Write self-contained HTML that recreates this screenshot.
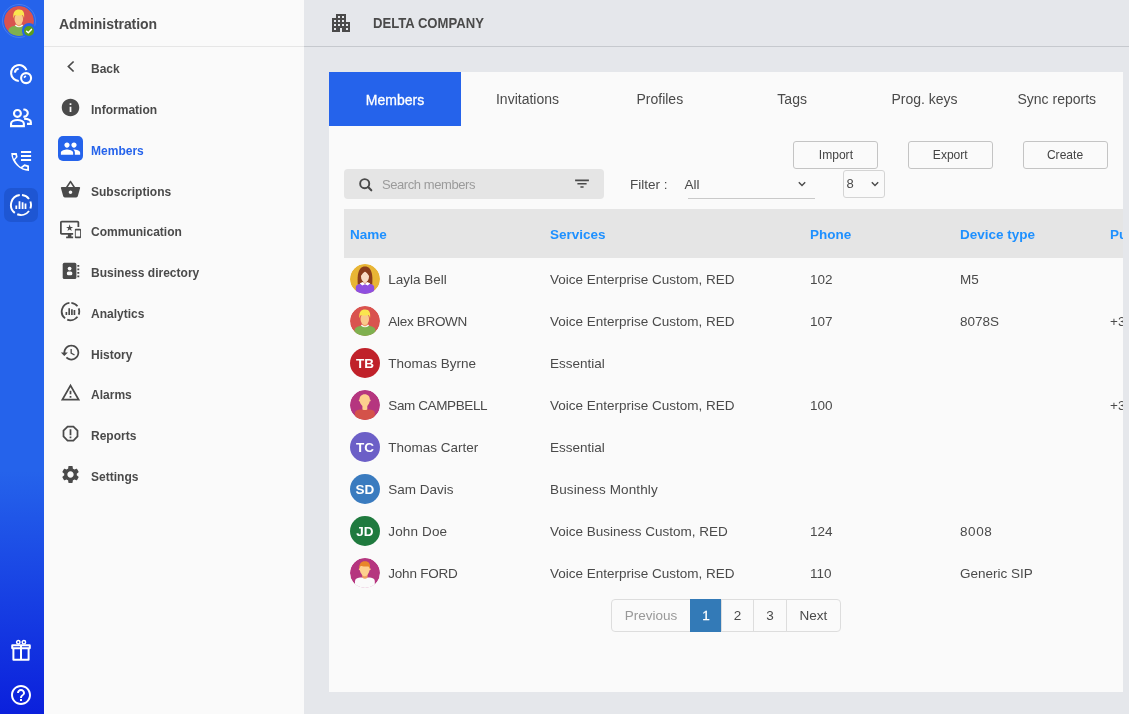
<!DOCTYPE html>
<html>
<head>
<meta charset="utf-8">
<title>Administration</title>
<style>
*{box-sizing:border-box;margin:0;padding:0}
html,body{width:1129px;height:714px;overflow:hidden}
.gl{position:absolute;left:0;top:0;width:100%;height:100%;will-change:transform}
body{font-family:"Liberation Sans",sans-serif;background:#e5e7eb;color:#4a4a4a;position:relative}
.abs{position:absolute}
#rail{position:absolute;left:0;top:0;width:44px;height:714px;background:linear-gradient(180deg,#2563eb 0%,#2563eb 66%,#0b20dc 100%)}
#side{position:absolute;left:44px;top:0;width:260px;height:714px;background:#fafafa}
#side .hd{position:absolute;left:0;top:0;width:260px;height:47px;border-bottom:1px solid #e6e6e6}
#side .hd span{position:absolute;left:15px;top:15px;font-weight:bold;font-size:14px;line-height:18px;color:#4a4a4a;letter-spacing:-0.05px}
.nav{position:absolute;left:47px;font-weight:bold;font-size:13px;line-height:16px;color:#4a4a4a;white-space:nowrap;transform-origin:0 50%;transform:scaleX(.925)}
.nav.on{color:#2563eb}
.ni{position:absolute;left:16px;width:21px;height:21px;fill:#4a4a4a}
#main .hd{position:absolute;left:304px;top:0;width:825px;height:47px;border-bottom:1px solid #c6c9ce}
#panel{position:absolute;left:329px;top:72px;width:794px;height:620px;background:#fafafa;overflow:hidden}
.tab{position:absolute;top:0;height:54px;width:132.33px;text-align:center;font-size:14px;line-height:54px;color:#4a4a4a}
.tab.on{background:#2563eb;color:#fff;left:0;width:132px}
.btn{position:absolute;top:69px;width:85px;height:28px;border:1px solid #c4c4c4;border-radius:3px;background:#fafafa;text-align:center;font-size:13.33px;line-height:26px;color:#444}
.btn span{display:inline-block;transform:scaleX(.905)}
.th{position:absolute;top:154px;font-weight:bold;font-size:13.5px;line-height:18px;color:#1e90ff;white-space:nowrap}
.td{position:absolute;font-size:13.5px;line-height:18px;color:#4a4a4a;white-space:nowrap}
.av{position:absolute;left:21px;width:30px;height:30px;border-radius:50%;overflow:hidden;color:#fff;font-weight:bold;font-size:13.5px;line-height:31.4px;text-align:center}
.pg{position:absolute;top:527px;height:33px;border:1px solid #ddd;background:#fafafa;font-size:13.5px;line-height:31px;text-align:center;color:#4a4a4a}
</style>
</head>
<body>
<div id="rail">
<div class="abs" style="left:1.600px;top:3.700px;width:34.800px;height:34.800px;border-radius:50%;border:1.500px solid rgba(255,255,255,.15)"></div>
<svg class="abs" style="left:4px;top:6px" width="30" height="30" viewBox="-15 -15 30 30"><defs><clipPath id="c0"><circle r="15"/></clipPath></defs><g clip-path="url(#c0)"><circle r="15" fill="#d9534f"/><path d="M-10.500 16V9.500C-10.500 6.500-7 5.200-3.500 4.800L3.500 4.800C7 5.200 10.500 6.500 10.500 9.500V16z" fill="#7fb04f"/><path d="M-4.200 4.500Q0 8.200 4.200 4.500L3.800 3.800-3.800 3.800z" fill="#f6f3ea"/><path d="M-2.100 1H2.100V4.400Q0 6-2.100 4.400z" fill="#eea063"/><ellipse cx="-0.200" cy="-1.900" rx="4.300" ry="6" fill="#f9c98b"/><path d="M-5.500-2.500C-6.600-9.500-3.200-11.800 0.200-11.600 4.200-11.500 5.900-8.500 5-2.500 4.700-4.800 4-5.800 3-6.100 0-5.100-3-5.600-4-6.100-4.800-5.300-5.200-4.300-5.500-2.500z" fill="#fae54e"/></g></svg>
<div class="abs" style="left:21.600px;top:23.400px;width:14.800px;height:14.800px;border-radius:50%;background:#2563eb"></div>
<div class="abs" style="left:24px;top:26px;width:10px;height:10px;border-radius:50%;background:#5a9e1e"></div>
<svg class="abs" style="left:24px;top:26px" width="10" height="10" viewBox="0 0 10 10"><path d="M2.600 5.200L4.300 6.800 7.400 3.400" stroke="#fff" stroke-width="1.500" fill="none" stroke-linecap="round" stroke-linejoin="round"/></svg>
<svg class="abs" style="left:8px;top:62px" width="26" height="24" viewBox="0 0 26 24"><g fill="none" stroke="#fff" stroke-width="2.100" stroke-linecap="butt"><path d="M18.500 8.200A7.950 7.950 0 1 0 10.800 18.950"/><path d="M6.900 10.600A4.300 4.300 0 0 1 10.700 6.800"/><circle cx="18.100" cy="16.100" r="5"/><path d="M16 15.700L17.800 13.900" stroke-width="1.700"/></g></svg>
<svg class="abs" style="left:8px;top:106px" width="26" height="24" viewBox="0 0 26 24"><g fill="none" stroke="#fff" stroke-width="2.100" stroke-linejoin="miter"><circle cx="9.430" cy="7.420" r="3.450"/><path d="M3.050 20.100V17.600C3.050 15.200 6.500 14 9.450 14S15.850 15.200 15.850 17.600V20.100z"/><path d="M15.370 3.700A3.500 3.500 0 1 1 15.370 10.460"/><path d="M16.100 12.650C20 12.900 22.850 14 22.850 16.300V17.900H19"/></g></svg>
<svg class="abs" style="left:8px;top:149px" width="26" height="24" viewBox="0 0 26 24"><g fill="none" stroke="#fff" stroke-width="1.800" stroke-linejoin="round"><path fill="#fff" stroke="none" fill-rule="evenodd" d="M3.200 4.100H8.800L9.600 8.100 7 10.900C8.500 14 10.500 16.300 12.800 17.900L16.400 15.200 21 16.400V21.900C12 21.900 3.500 14 3.200 4.100zM4.900 5.900H7.450L7.900 8.100 6 10C5.300 8.700 5 7.400 4.900 5.900zM14.300 19.100L16.700 17.200 19.200 17.900V20.100C17.500 20 15.800 19.700 14.300 19.100z"/><path d="M13 3H23.100M13 7H23.100M13 11H23.100" stroke-width="1.900"/></g></svg>
<div class="abs" style="left:4px;top:188px;width:34px;height:34px;border-radius:7px;background:#1e56d3"></div>
<svg class="abs" style="left:9px;top:192.900px" width="24" height="24" viewBox="0 0 24 24"><path d="M5.84 19.88A10 10 0 0 1 10.78 2.07M12.96 2.05A10 10 0 0 1 19.99 5.98M21.37 8.50A10 10 0 0 1 21.37 15.50M19.99 18.02A10 10 0 0 1 8.25 21.27" stroke="#fff" stroke-width="1.95" fill="none" stroke-linecap="butt"/><path d="M7.300 15.900V12.500M10.500 15.900V8.300M13.600 15.900V9.300M16.500 15.900V10.400" stroke="#fff" stroke-width="1.79" fill="none" stroke-linecap="butt"/></svg>
<svg class="abs" style="left:9px;top:639px" width="24" height="24" viewBox="0 0 24 24"><g fill="none" stroke="#fff" stroke-width="2" stroke-linejoin="round"><rect x="3.200" y="6.200" width="17.600" height="3" rx="0.300"/><path d="M4.400 9.200V20.800H19.600V9.200"/><path d="M12 6V20.800"/><circle cx="9.300" cy="3.300" r="1.700" stroke-width="1.500"/><circle cx="14.900" cy="3.300" r="1.700" stroke-width="1.500"/></g></svg>
<svg class="abs" style="left:9px;top:683px" width="24" height="24" viewBox="0 0 24 24"><path fill="#fff" d="M11 18h2v-2h-2v2zm1-16C6.480 2 2 6.480 2 12s4.480 10 10 10 10-4.480 10-10S17.520 2 12 2zm0 18c-4.410 0-8-3.590-8-8s3.590-8 8-8 8 3.590 8 8-3.590 8-8 8zm0-14c-2.210 0-4 1.790-4 4h2c0-1.100.9-2 2-2s2 .9 2 2c0 2-3 1.750-3 5h2c0-2.250 3-2.500 3-5 0-2.210-1.790-4-4-4z"/></svg>
</div>
<div id="side"><div class="gl">
<div class="hd"><span>Administration</span></div>
<svg class="abs" style="left:22px;top:60.0px" width="10" height="13" viewBox="0 0 10 13"><path d="M7.600 1.500L2.400 6.500 7.600 11.500" stroke="#4a4a4a" stroke-width="1.700" fill="none"/></svg>
<div class="nav" style="top:61px">Back</div>
<svg class="abs" style="left:16px;top:96.7px" width="21" height="21" viewBox="0 0 24 24"><path fill="#4a4a4a" d="M12 2C6.48 2 2 6.48 2 12s4.48 10 10 10 10-4.48 10-10S17.52 2 12 2zm1 15h-2v-6h2v6zm0-8h-2V7h2v2z"/></svg>
<div class="nav" style="top:102px">Information</div>
<div class="abs" style="left:14px;top:135.7px;width:25px;height:25px;border-radius:5px;background:#2563eb"></div>
<svg class="abs" style="left:16px;top:137.7px" width="21" height="21" viewBox="0 0 24 24"><path fill="#fff" d="M16 11c1.66 0 2.99-1.34 2.99-3S17.66 5 16 5c-1.66 0-3 1.34-3 3s1.34 3 3 3zm-8 0c1.66 0 2.99-1.34 2.99-3S9.66 5 8 5C6.34 5 5 6.34 5 8s1.34 3 3 3zm0 2c-2.33 0-7 1.17-7 3.5V19h14v-2.5c0-2.33-4.67-3.5-7-3.5zm8 0c-.29 0-.62.02-.97.05 1.16.84 1.97 1.97 1.97 3.45V19h6v-2.5c0-2.33-4.67-3.5-7-3.5z"/></svg>
<div class="nav on" style="top:143px">Members</div>
<svg class="abs" style="left:16px;top:178.7px" width="21" height="21" viewBox="0 0 24 24"><path fill="#4a4a4a" d="M17.21 9l-4.38-6.56c-.19-.28-.51-.42-.83-.42-.32 0-.64.14-.83.43L6.79 9H2c-.55 0-1 .45-1 1 0 .09.01.18.04.27l2.54 9.27c.23.84 1 1.46 1.92 1.46h13c.92 0 1.69-.62 1.93-1.46l2.54-9.27L23 10c0-.55-.45-1-1-1h-4.790zM9 9l3-4.400L15 9H9zm3 8c-1.100 0-2-.9-2-2s.9-2 2-2 2 .9 2 2-.9 2-2 2z"/></svg>
<div class="nav" style="top:184px">Subscriptions</div>
<svg class="abs" style="left:16px;top:218.7px" width="21" height="21" viewBox="0 0 24 24"><path fill="#4a4a4a" d="M23 11.010L18 11c-.55 0-1 .45-1 1v9c0 .55.45 1 1 1h5c.55 0 1-.45 1-1v-9c0-.55-.45-.99-1-.99zM23 20h-5v-7h5v7zM20 2H2C.89 2 0 2.890 0 4v12c0 1.100.89 2 2 2h7v2H7v2h8v-2h-2v-2h2v-2H2V4h18v5h2V4c0-1.110-.9-2-2-2zm-8.030 7L11 6l-.97 3H7l2.470 1.760-.94 2.910 2.470-1.800 2.470 1.800-.94-2.910L15 9h-3.030z"/></svg>
<div class="nav" style="top:224px">Communication</div>
<svg class="abs" style="left:16px;top:259.7px" width="21" height="21" viewBox="0 0 21 21"><rect x="2.700" y="2.800" width="13.700" height="16.300" rx="1.600" fill="#4a4a4a"/><circle cx="9.600" cy="8.600" r="1.900" fill="#fafafa"/><rect x="6.900" y="11.500" width="5.400" height="3.700" rx="1.500" fill="#fafafa"/><path d="M18.300 4.950V18" stroke="#4a4a4a" stroke-width="1.900" stroke-dasharray="1.900 1.600"/></svg>
<div class="nav" style="top:265px">Business directory</div>
<svg class="abs" style="left:16px;top:300.7px" width="21" height="21" viewBox="0 0 24 24"><path d="M5.84 19.88A10 10 0 0 1 10.78 2.07M12.96 2.05A10 10 0 0 1 19.99 5.98M21.37 8.50A10 10 0 0 1 21.37 15.50M19.99 18.02A10 10 0 0 1 8.25 21.27" stroke="#4a4a4a" stroke-width="2.05" fill="none" stroke-linecap="butt"/><path d="M7.300 15.900V12.500M10.500 15.900V8.300M13.600 15.900V9.300M16.500 15.900V10.400" stroke="#4a4a4a" stroke-width="1.89" fill="none" stroke-linecap="butt"/></svg>
<div class="nav" style="top:306px">Analytics</div>
<svg class="abs" style="left:16px;top:341.7px" width="21" height="21" viewBox="0 0 24 24"><path fill="#4a4a4a" d="M13 3c-4.970 0-9 4.030-9 9H1l3.890 3.890.07.14L9 12H6c0-3.870 3.130-7 7-7s7 3.130 7 7-3.130 7-7 7c-1.930 0-3.680-.79-4.940-2.060l-1.420 1.420C8.270 19.990 10.510 21 13 21c4.970 0 9-4.030 9-9s-4.030-9-9-9zm-1 5v5l4.280 2.540.72-1.210-3.500-2.080V8H12z"/></svg>
<div class="nav" style="top:347px">History</div>
<svg class="abs" style="left:16px;top:381.7px" width="21" height="21" viewBox="0 0 24 24"><path fill="#4a4a4a" d="M12 5.990L19.530 19H4.470L12 5.990M12 2L1 21h22L12 2zm1 14h-2v2h2v-2zm0-6h-2v4h2v-4z"/></svg>
<div class="nav" style="top:387px">Alarms</div>
<svg class="abs" style="left:16px;top:422.7px" width="21" height="21" viewBox="0 0 24 24"><path fill="#4a4a4a" d="M15.730 3H8.270L3 8.270v7.460L8.270 21h7.460L21 15.730V8.270L15.730 3zM19 14.900L14.900 19H9.100L5 14.900V9.100L9.100 5h5.800L19 9.100v5.800zM11 7h2v7h-2zm0 8.500h2v2h-2z"/></svg>
<div class="nav" style="top:428px">Reports</div>
<svg class="abs" style="left:16px;top:463.7px" width="21" height="21" viewBox="0 0 24 24"><path fill="#4a4a4a" d="M19.140 12.940c.04-.3.06-.61.06-.94 0-.32-.02-.64-.07-.94l2.030-1.580c.18-.14.23-.41.12-.61l-1.920-3.320c-.12-.22-.37-.29-.59-.22l-2.390.96c-.5-.38-1.030-.7-1.620-.94l-.36-2.540c-.04-.24-.24-.41-.48-.41h-3.840c-.24 0-.43.17-.47.41l-.36 2.540c-.59.24-1.130.57-1.620.94l-2.390-.96c-.22-.08-.47 0-.59.220L2.740 8.870c-.12.21-.08.47.12.61l2.030 1.580c-.05.3-.09.63-.09.94s.02.64.07.94l-2.030 1.580c-.18.14-.23.41-.12.61l1.920 3.320c.12.22.37.29.59.22l2.390-.96c.5.38 1.030.7 1.620.94l.36 2.540c.05.24.24.41.48.41h3.840c.24 0 .44-.17.47-.41l.36-2.540c.59-.24 1.130-.56 1.620-.94l2.390.96c.22.08.47 0 .59-.22l1.920-3.320c.12-.22.07-.47-.12-.61l-2.010-1.580zM12 15.600c-1.980 0-3.600-1.620-3.600-3.600s1.620-3.600 3.600-3.600 3.600 1.620 3.600 3.600-1.620 3.600-3.600 3.600z"/></svg>
<div class="nav" style="top:469px">Settings</div>
</div></div>
<div id="main"><div class="hd"></div><div class="gl">
<svg class="abs" style="left:329px;top:11px" width="24" height="24" viewBox="0 0 24 24"><path fill="#4a4a4a" d="M17 11V3H7v4H3v14h8v-4h2v4h8V11h-4zM7 19H5v-2h2v2zm0-4H5v-2h2v2zm0-4H5V9h2v2zm4 4H9v-2h2v2zm0-4H9V9h2v2zm0-4H9V5h2v2zm4 8h-2v-2h2v2zm0-4h-2V9h2v2zm0-4h-2V5h2v2zm4 12h-2v-2h2v2zm0-4h-2v-2h2v2z"/></svg>
<div class="abs" style="left:373px;top:14px;font-weight:bold;font-size:14px;line-height:18px;color:#4a4a4a;white-space:nowrap;transform-origin:0 50%;transform:scaleX(.936)">DELTA COMPANY</div>
</div></div>
<div id="panel"><div class="gl">
<div class="tab on" style="padding-top:1px;-webkit-text-stroke:0.3px #fff">Members</div>
<div class="tab" style="left:132.33px">Invitations</div>
<div class="tab" style="left:264.66px">Profiles</div>
<div class="tab" style="left:396.99px">Tags</div>
<div class="tab" style="left:529.32px">Prog. keys</div>
<div class="tab" style="left:661.65px">Sync reports</div>
<div class="btn" style="left:464px"><span>Import</span></div>
<div class="btn" style="left:579px"><span>Export</span></div>
<div class="btn" style="left:694px"><span>Create</span></div>
<div class="abs" style="left:15px;top:97px;width:260px;height:30px;border-radius:4px;background:#e5e5e5"></div>
<svg class="abs" style="left:29.700px;top:105.600px" width="14" height="14" viewBox="0 0 14 14"><circle cx="5.700" cy="5.700" r="4.550" stroke="#4a4a4a" stroke-width="1.900" fill="none"/><path d="M9.100 9.100L12.300 12.300" stroke="#4a4a4a" stroke-width="2.100" stroke-linecap="round"/></svg>
<div class="abs" style="left:53px;top:104px;font-size:13px;line-height:18px;color:#9b9b9b;letter-spacing:-0.42px;white-space:nowrap">Search members</div>
<svg class="abs" style="left:245px;top:106px" width="16" height="12" viewBox="0 0 16 12"><path d="M1.100 2.400H14.900M3.400 5.700H12.600M6.400 9H9.600" stroke="#4a4a4a" stroke-width="1.600" fill="none"/></svg>
<div class="abs" style="left:301px;top:104px;font-size:13.5px;line-height:18px;white-space:nowrap">Filter :</div>
<div class="abs" style="left:355.500px;top:104px;font-size:13.5px;line-height:18px;white-space:nowrap">All</div>
<div class="abs" style="left:359px;top:126px;width:127px;height:1px;background:#c9c9c9"></div>
<svg class="abs" style="left:468px;top:108px" width="10" height="8" viewBox="0 0 10 8"><path d="M1.800 2.200L5 5.500 8.200 2.200" stroke="#4a4a4a" stroke-width="1.400" fill="none"/></svg>
<div class="abs" style="left:514px;top:98px;width:42px;height:28px;border:1px solid #d4d4d4;border-radius:3px"></div>
<div class="abs" style="left:517.500px;top:103px;font-size:13px;line-height:18px">8</div>
<svg class="abs" style="left:541px;top:108px" width="10" height="8" viewBox="0 0 10 8"><path d="M1.800 2.200L5 5.500 8.200 2.200" stroke="#4a4a4a" stroke-width="1.400" fill="none"/></svg>
<div class="abs" style="left:15px;top:137px;width:800px;height:48.500px;background:#e5e5e5"></div>
<div class="th" style="left:21px">Name</div>
<div class="th" style="left:221px">Services</div>
<div class="th" style="left:481px">Phone</div>
<div class="th" style="left:631px">Device type</div>
<div class="th" style="left:781px">Public number</div>
<svg class="abs" style="left:21px;top:192px" width="30" height="30" viewBox="-15 -15 30 30"><defs><clipPath id="c1"><circle r="15"/></clipPath></defs><g clip-path="url(#c1)"><circle r="15" fill="#e8b535"/><path d="M-7.200 5.500C-7.800-2-7.500-12.500 0-12.500S7.800-2 7.200 5.500z" fill="#8a3d1c"/><path d="M-9.200 16V8.500C-9.200 5.800-6 5-3 4.600H3C6 5 9.200 5.800 9.200 8.500V16z" fill="#8f4fe0"/><path d="M-5.300 4.200L-2 3 0 5.200 2 3 5.300 4.200 2.800 6.500 0 5.200-2.800 6.500z" fill="#fff"/><path d="M-1.600 1H1.600V4Q0 5.300-1.600 4z" fill="#f3cdb0"/><ellipse cx="0" cy="-2.400" rx="4" ry="5.400" fill="#f8dcc4"/><path d="M-4.400-3C-4.600-7-3-9 0-9S4.600-7 4.400-3C3-5 1-6.800 0-7.600-1-6.800-3-5-4.400-3z" fill="#8a3d1c"/></g></svg>
<div class="td" style="left:59.30000000000001px;top:199.4px">Layla Bell</div>
<div class="td" style="left:221px;top:199.4px">Voice Enterprise Custom, RED</div>
<div class="td" style="left:481px;top:199.4px">102</div>
<div class="td" style="left:631px;top:199.4px">M5</div>
<svg class="abs" style="left:21px;top:234px" width="30" height="30" viewBox="-15 -15 30 30"><defs><clipPath id="c2"><circle r="15"/></clipPath></defs><g clip-path="url(#c2)"><circle r="15" fill="#d9534f"/><path d="M-10.500 16V9.500C-10.500 6.500-7 5.200-3.500 4.800L3.500 4.800C7 5.200 10.500 6.500 10.500 9.500V16z" fill="#7fb04f"/><path d="M-4.200 4.500Q0 8.200 4.200 4.500L3.800 3.800-3.800 3.800z" fill="#f6f3ea"/><path d="M-2.100 1H2.100V4.400Q0 6-2.100 4.400z" fill="#eea063"/><ellipse cx="-0.200" cy="-1.900" rx="4.300" ry="6" fill="#f9c98b"/><path d="M-5.500-2.500C-6.600-9.500-3.200-11.800 0.200-11.600 4.200-11.500 5.900-8.500 5-2.500 4.700-4.800 4-5.800 3-6.100 0-5.100-3-5.600-4-6.100-4.800-5.300-5.200-4.300-5.500-2.500z" fill="#fae54e"/></g></svg>
<div class="td" style="left:59.30000000000001px;top:241.4px;letter-spacing:-0.31px">Alex BROWN</div>
<div class="td" style="left:221px;top:241.4px">Voice Enterprise Custom, RED</div>
<div class="td" style="left:481px;top:241.4px">107</div>
<div class="td" style="left:631px;top:241.4px">8078S</div>
<div class="td" style="left:781px;top:241.4px">+33</div>
<div class="av" style="top:276px;background:#c0212a">TB</div>
<div class="td" style="left:59.30000000000001px;top:283.4px">Thomas Byrne</div>
<div class="td" style="left:221px;top:283.4px">Essential</div>
<svg class="abs" style="left:21px;top:318px" width="30" height="30" viewBox="-15 -15 30 30"><defs><clipPath id="c4"><circle r="15"/></clipPath></defs><g clip-path="url(#c4)"><circle r="15" fill="#b5367f"/><path d="M-10 16V8.300C-10 6-8.500 5.100-5 4.600H5C8.300 5.100 9.800 6 9.800 8.300V16z" fill="#d4524a"/><path d="M-0.300-10.800C3-10.800 4.900-8.500 4.900-5.500 4.900-2.500 3.500-0.300 2.300 1V4.400Q0 5.600-2.600 4.400V1C-4-0.300-5.500-2.500-5.500-5.500-5.500-8.500-3.500-10.800-0.300-10.800z" fill="#fdd08e"/><circle cx="-5.300" cy="-4.600" r="0.900" fill="#fdd08e"/><circle cx="4.800" cy="-4.600" r="0.900" fill="#fdd08e"/></g></svg>
<div class="td" style="left:59.30000000000001px;top:325.4px;letter-spacing:-0.39px">Sam CAMPBELL</div>
<div class="td" style="left:221px;top:325.4px">Voice Enterprise Custom, RED</div>
<div class="td" style="left:481px;top:325.4px">100</div>
<div class="td" style="left:781px;top:325.4px">+33</div>
<div class="av" style="top:360px;background:#6c5fc7">TC</div>
<div class="td" style="left:59.30000000000001px;top:367.4px">Thomas Carter</div>
<div class="td" style="left:221px;top:367.4px">Essential</div>
<div class="av" style="top:402px;background:#3a7bbf">SD</div>
<div class="td" style="left:59.30000000000001px;top:409.4px">Sam Davis</div>
<div class="td" style="left:221px;top:409.4px;letter-spacing:0.13px">Business Monthly</div>
<div class="av" style="top:444px;background:#1f7a3e">JD</div>
<div class="td" style="left:59.30000000000001px;top:451.4px;letter-spacing:0.14px">John Doe</div>
<div class="td" style="left:221px;top:451.4px">Voice Business Custom, RED</div>
<div class="td" style="left:481px;top:451.4px">124</div>
<div class="td" style="left:631px;top:451.4px;letter-spacing:0.6px">8008</div>
<svg class="abs" style="left:21px;top:486px" width="30" height="30" viewBox="-15 -15 30 30"><defs><clipPath id="c8"><circle r="15"/></clipPath></defs><g clip-path="url(#c8)"><circle r="15" fill="#b5367f"/><path d="M-10 16V8.300C-10 6-8.500 5.100-5 4.600H5C8.300 5.100 9.800 6 9.800 8.300V16z" fill="#fafafa"/><path d="M-2.800 1H2.600V4.600Q0 7-2.800 4.600z" fill="#eea063"/><path d="M-0.300-10.500C3-10.500 4.900-8.500 4.900-5 4.900-2 3.300 0.800 2 2.400Q-0.200 4-2.500 2.400C-3.900 0.800-5.500-2-5.500-5-5.500-8.500-3.500-10.500-0.300-10.500z" fill="#fdd08e"/><circle cx="-5.300" cy="-3.800" r="0.900" fill="#fdd08e"/><circle cx="4.800" cy="-3.800" r="0.900" fill="#fdd08e"/><path d="M-5.500-3.800C-6.300-10-3.200-12 0-11.800 3.700-11.800 5.700-9.500 4.900-3.800 4.600-5.300 4.200-6.200 3.500-6.600-0.500-6.100-3-6.600-4.200-6.900-5-6.200-5.200-5.300-5.500-3.800z" fill="#e8862a"/></g></svg>
<div class="td" style="left:59.30000000000001px;top:493.4px;letter-spacing:-0.22px">John FORD</div>
<div class="td" style="left:221px;top:493.4px">Voice Enterprise Custom, RED</div>
<div class="td" style="left:481px;top:493.4px">110</div>
<div class="td" style="left:631px;top:493.4px">Generic SIP</div>
<div class="pg" style="left:282.0px;width:80.0px;color:#999;border-radius:4px 0 0 4px">Previous</div>
<div class="pg" style="left:361.0px;width:32.0px;background:#337ab7;border-color:#337ab7;color:#fff;-webkit-text-stroke:0.3px #fff">1</div>
<div class="pg" style="left:392.0px;width:33.0px;">2</div>
<div class="pg" style="left:424.0px;width:34.0px;">3</div>
<div class="pg" style="left:457.0px;width:55.0px;border-radius:0 4px 4px 0">Next</div>
</div></div>
</body>
</html>
